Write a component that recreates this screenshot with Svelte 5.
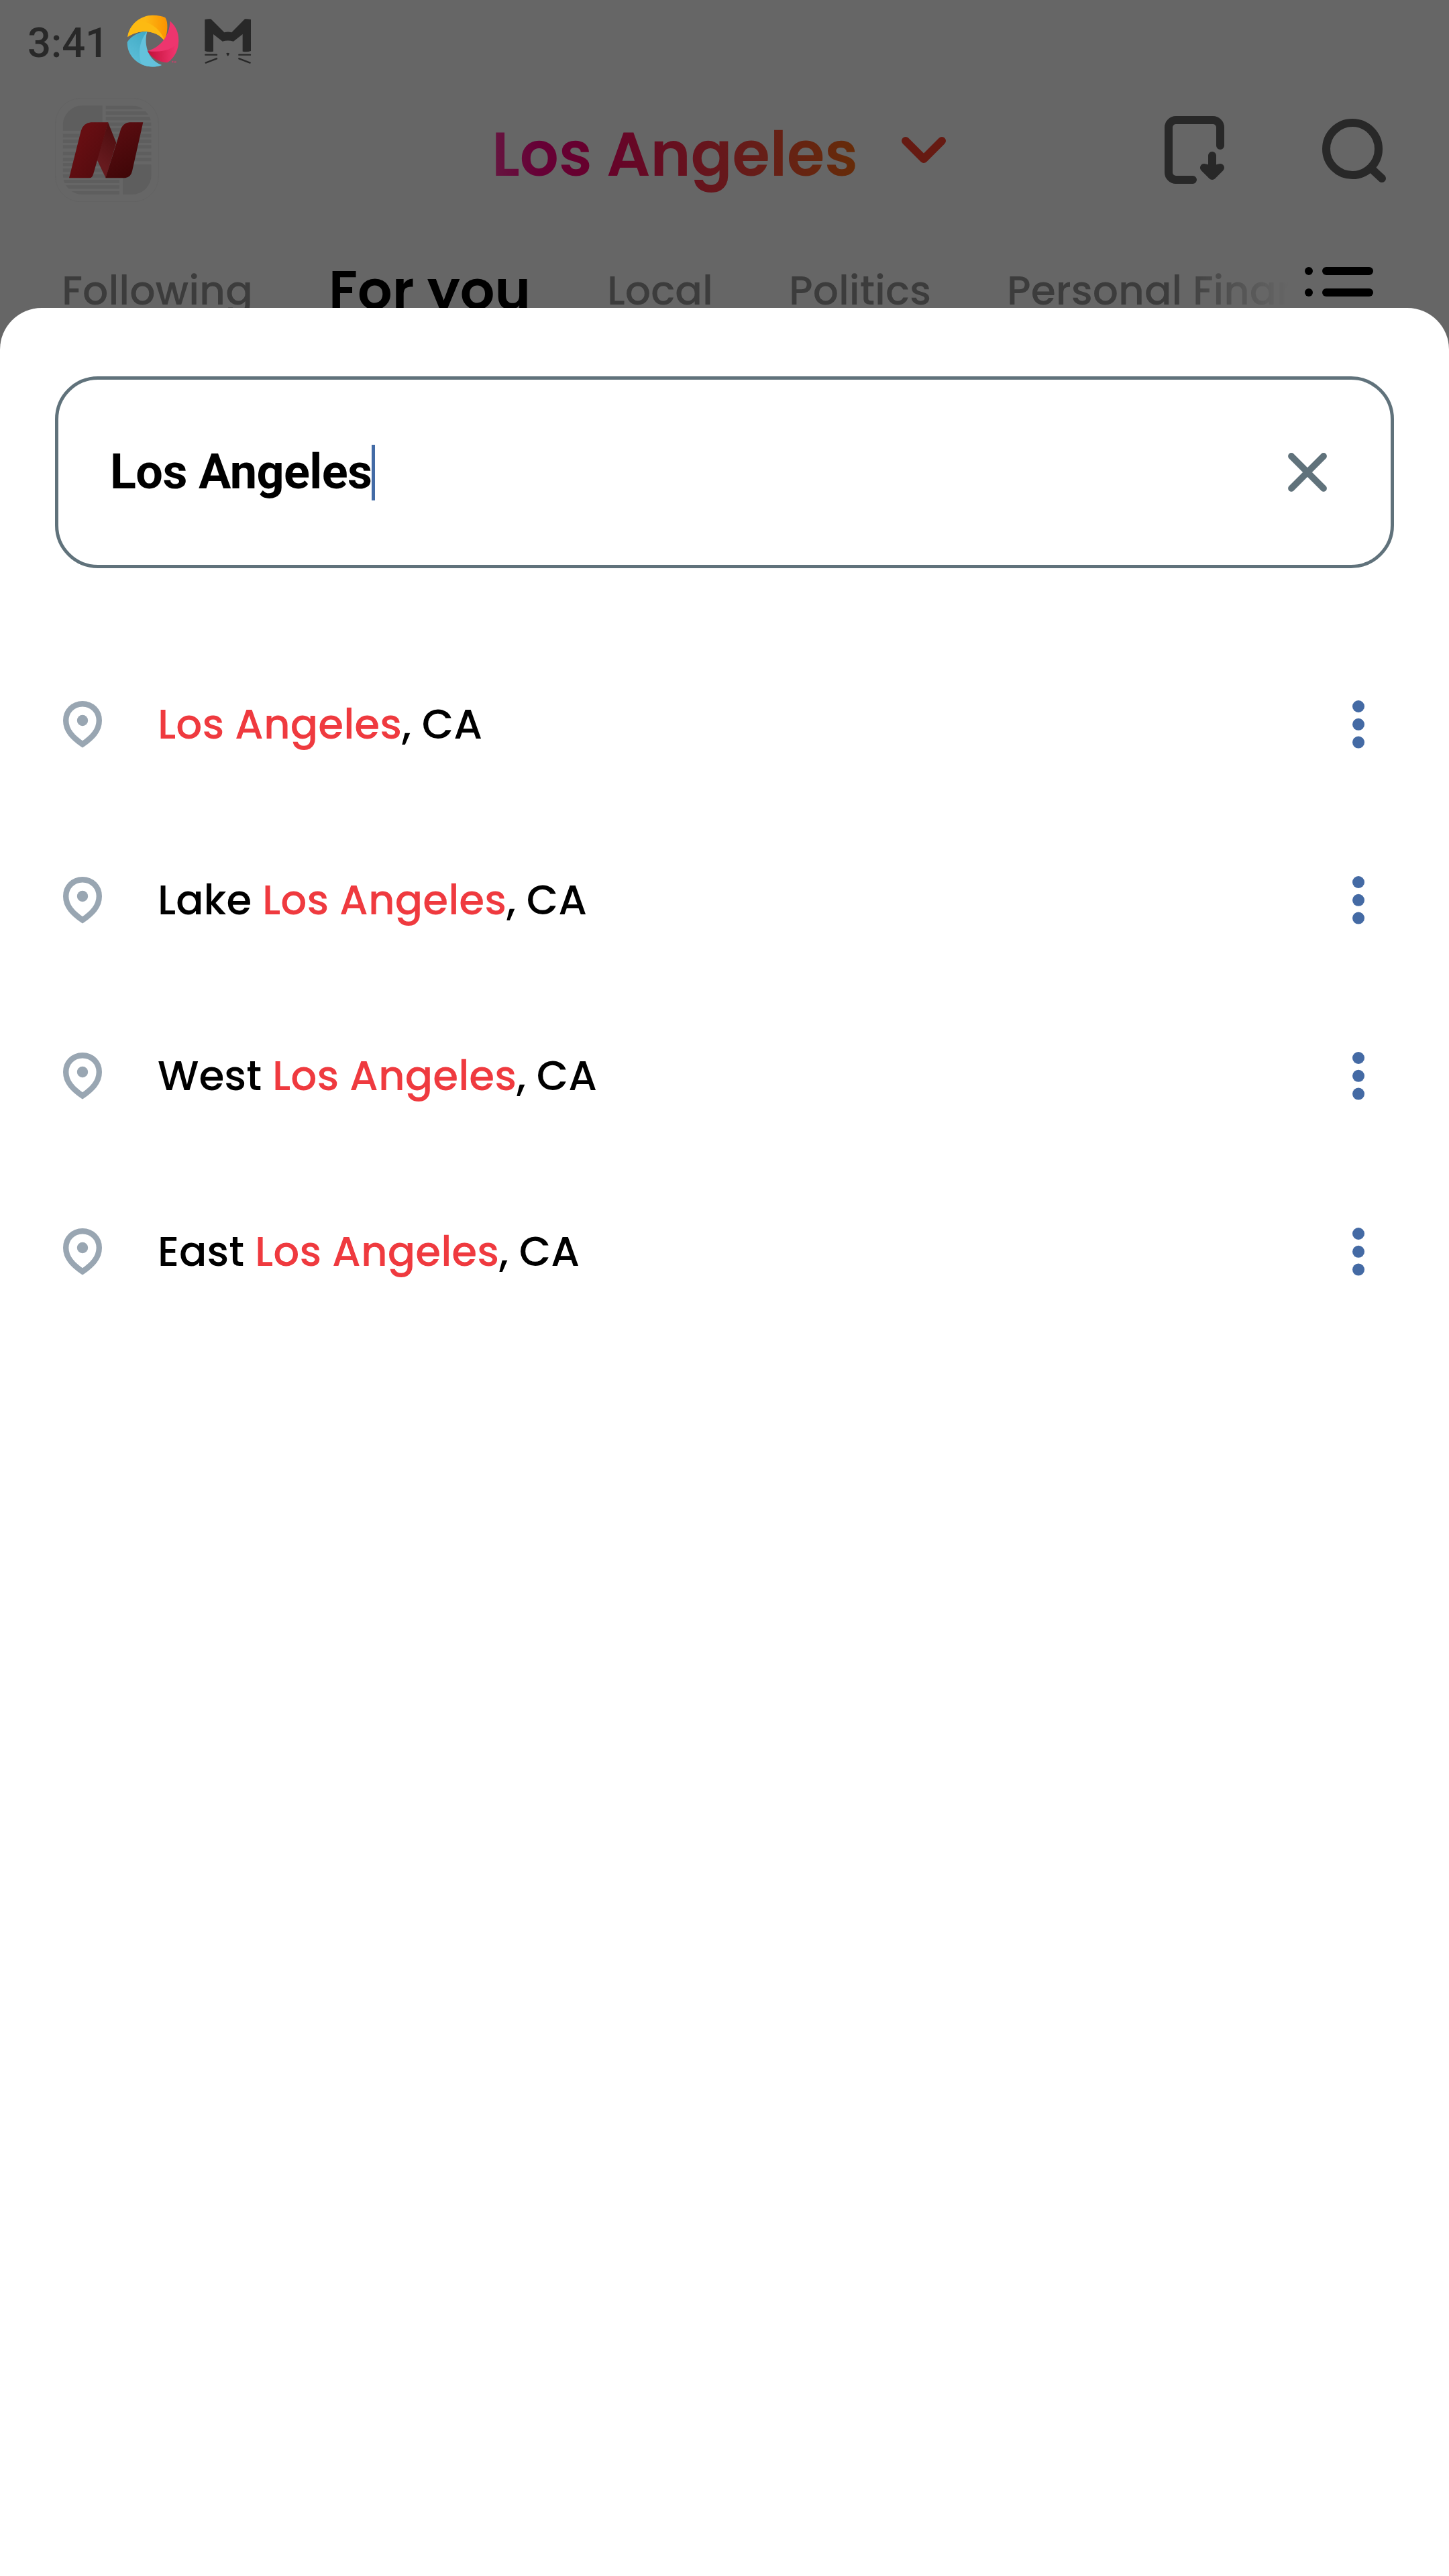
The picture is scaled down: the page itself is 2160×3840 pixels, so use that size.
<script>
  const tabs = [
    { start: 92, words: [{ text: 'Following', width: 285 }] },
    { start: 490, active: true, words: [{ text: 'For you', width: 301 }] },
    { start: 905, words: [{ text: 'Local', width: 158 }] },
    { start: 1176, words: [{ text: 'Politics', width: 212 }] },
    { start: 1501, words: [{ text: 'Personal ', width: 277 }, { text: 'Finance', width: 236 }] }
  ];
  const gaps = tabs.map((tab, i) => {
    if (i === 0) return tab.start;
    const prev = tabs[i - 1];
    return tab.start - prev.start - prev.words.reduce((sum, w) => sum + w.width, 0);
  });
  const rows = [
    { prefix: '', width: 0 },
    { prefix: 'Lake ', width: 156 },
    { prefix: 'West ', width: 171 },
    { prefix: 'East ', width: 145 }
  ];
</script>

{#snippet label(text, width, kind)}
  <svg class="label {kind}" {width} height="80">
    <text x="0" y="60" textLength={width} lengthAdjust="spacingAndGlyphs">{text}</text>
  </svg>
{/snippet}

<main class="screen">
  <header>
    <div class="status">
      <span class="clock">3:41</span>
      <svg class="swirl" viewBox="560 60 250 250" width="83.33" height="83.33">
        <defs>
          <linearGradient id="amber"><stop offset=".45" stop-color="#fdb813" /><stop offset="1" stop-color="#fb9200" /></linearGradient>
          <linearGradient id="aqua" x1="1" y1="0" x2="0.2" y2="1"><stop stop-color="#36a3be" /><stop offset="1" stop-color="#5fc0da" /></linearGradient>
          <linearGradient id="rose"><stop stop-color="#c31039" /><stop offset=".9" stop-color="#ee346d" /></linearGradient>
        </defs>
        <path fill="url(#amber)" d="M570 165C577 108 628 68 682 68C706 68 725 72 738 79C752 98 750 145 735 183C705 139 631 124 570 165Z" />
        <path fill="#fdba12" d="M570 165C574 132 593 105 620 93C672 96 719 132 735 183C705 139 631 124 570 165Z" />
        <path fill="url(#aqua)" d="M568 188C590 157 623 141 657 141C640 190 650 264 722 291C656 318 566 272 568 188Z" />
        <path fill="#63c2dc" d="M657 141C643 190 654 264 722 291C700 300 665 303 631 287C614 230 626 177 657 141Z" />
        <path fill="url(#rose)" d="M659 228C723 234 771 211 797 178C800 219 780 260 747 280C712 279 676 261 659 228Z" />
        <path fill="#ee356e" d="M759 94C789 119 801 153 797 193C764 225 713 236 659 228C713 214 759 163 759 94Z" />
        <path fill="none" stroke="#ee356e" stroke-width="2" d="M767 274h7m-4 0v8m7 0v-8l4 5l4-5v8" />
      </svg>
      <svg class="cat" viewBox="910 80 220 212" width="73.33" height="70.67">
        <path fill="#282828" d="M917 89Q930 86 944 87L1004 147Q1020 142 1037 147L1096 87Q1110 86 1123 89V230Q1104 237 1086 232V155L1045 187Q1020 180 996 187L955 155V232Q935 237 917 230Z" />
        <path fill="#282828" d="M1013 240Q1020 236 1027 240Q1026 248 1020 253Q1014 248 1013 240Z" />
        <path fill="none" stroke="#282828" stroke-width="7" stroke-linecap="round" d="M920 247H970M1070 247H1120M921 283L970 264M1119 283L1070 264" />
      </svg>
    </div>

    <div class="topbar">
      <svg class="logo" viewBox="246 437 465 465" width="155" height="155">
        <defs>
          <linearGradient id="n-left" x2="1" y2="1"><stop offset=".3" stop-color="#660e12" /><stop offset="1" stop-color="#4f0a0d" /></linearGradient>
          <linearGradient id="n-mid" x1=".7" y1="0" x2=".4" y2="1"><stop stop-color="#4c0c0e" /><stop offset=".8" stop-color="#661a1e" /></linearGradient>
          <linearGradient id="n-right" x1=".3" x2=".7" y2="1"><stop stop-color="#5c0d11" /><stop offset="1" stop-color="#3e0607" /></linearGradient>
          <clipPath id="tile"><rect x="281" y="471" width="396" height="398" rx="88" /></clipPath>
        </defs>
        <rect x="248" y="439" width="461" height="462" rx="112" fill="none" stroke="#616161" stroke-width="2" />
        <g clip-path="url(#tile)" fill="#5e5e5e">
          <path d="M281 471H458V583H281ZM549 735H677V869H549Z" />
          <path d="M473 472h204v15H473zM473 497h204v15H473zM473 522h204v15H473zM473 547h204v15H473zM473 573h204v15H473zM473 598h204v15H473zM473 623h204v15H473zM473 648h204v15H473zM473 678h204v15H473zM473 705h204v15H473z" />
          <path d="M281 598h192v15H281zM281 623h192v15H281zM281 648h192v15H281zM281 678h192v15H281zM281 705h192v15H281zM281 728h192v15H281zM281 753h192v15H281zM281 778h192v15H281zM281 803h253v15H281zM281 828h253v15H281zM281 854h253v15H281z" />
        </g>
        <path fill="url(#n-mid)" d="M483 546L520 638L473 795L434 714Z" />
        <path fill="url(#n-left)" d="M309 795L362 585Q372 549 407 546H484L418 775Q413 794 400 795Z" />
        <path fill="url(#n-right)" d="M472 795L537 588Q546 549 580 546H640L591 765Q585 792 560 795Z" />
      </svg>
      <div class="place">
        <svg class="label title" width="546" height="110">
          <defs>
            <linearGradient id="sunset" gradientUnits="userSpaceOnUse" x1="0" y1="90" x2="548" y2="60">
              <stop stop-color="#661640" /><stop offset=".13" stop-color="#660036" /><stop offset=".28" stop-color="#66002c" />
              <stop offset=".5" stop-color="#66101f" /><stop offset=".75" stop-color="#661f17" /><stop offset="1" stop-color="#662c08" />
            </linearGradient>
          </defs>
          <text x="0" y="90" textLength="546" lengthAdjust="spacingAndGlyphs">Los Angeles</text>
        </svg>
        <svg class="chevron" viewBox="0 0 66 40" width="66" height="40"><path d="M6 6L33 33L60 6" /></svg>
      </div>
      <svg class="tool save" viewBox="0 0 90 102" width="90" height="102">
        <path d="M83 44V17A11 11 0 0 0 72 6H17A11 11 0 0 0 6 17V84A11 11 0 0 0 17 95H42" />
        <path class="arrow" d="M71 59V89M59 77L71 89L83 77L71 80Z" />
      </svg>
      <svg class="tool find" viewBox="0 0 96 96" width="96" height="96">
        <circle cx="45" cy="45" r="39" /><path d="M74 75L89 89" />
      </svg>
    </div>

    <nav>
      <div class="tabs">
        {#each tabs as tab, i}
          <a class="tab" style:margin-left="{gaps[i]}px">
            {#each tab.words as word}{@render label(word.text, word.width, tab.active ? 'tab-on' : 'tab-off')}{/each}
          </a>
        {/each}
      </div>
      <svg class="list" viewBox="0 0 102 44" width="102" height="44">
        <circle cx="6" cy="6" r="6" /><rect x="26" width="76" height="12" rx="6" />
        <circle cx="6" cy="38" r="6" /><rect x="26" y="32" width="76" height="12" rx="6" />
      </svg>
    </nav>
  </header>

  <section class="sheet">
    <div class="field">
      <span class="query">Los Angeles</span><i class="caret"></i>
      <svg class="clear" viewBox="0 0 58 58" width="58" height="58"><path d="M5 5L53 53M53 5L5 53" /></svg>
    </div>
    <ul>
      {#each rows as row}
        <li>
          <svg class="pin" viewBox="0 0 58 70" width="58" height="70">
            <path d="M29 4.200C14.500 4.200 4.200 15.500 4.200 29C4.200 44 14.500 54.500 29 64.500C43.500 54.500 53.800 44 53.800 29C53.800 15.500 43.500 4.200 29 4.200Z" />
            <circle cx="29" cy="29" r="8.200" />
          </svg>
          <div class="name">
            {#if row.prefix}{@render label(row.prefix, row.width, 'plain')}{/if}
            {@render label('Los Angeles', 364, 'match')}
            {@render label(', CA', 120, 'plain')}
          </div>
          <svg class="more" viewBox="0 0 20 74" width="20" height="74">
            <circle cx="10" cy="10" r="9" /><circle cx="10" cy="36.800" r="9" /><circle cx="10" cy="63.600" r="9" />
          </svg>
        </li>
      {/each}
    </ul>
  </section>
</main>

<style>
  :global(body) { margin: 0; background: #666; }
  .screen { width: 2160px; height: 3840px; overflow: hidden; display: flex; flex-direction: column; background: #666; }
  svg { display: block; flex: none; }
  header { height: 459px; flex: none; }

  .status { height: 122px; box-sizing: border-box; padding: 1.500px 0 0 41px; display: flex; align-items: center; }
  .clock { width: 145px; font: 500 61.500px/72px Roboto, sans-serif; color: #282828; padding-top: 4px; }
  .swirl { margin-left: 1px; }
  .cat { margin-left: 33px; }

  .topbar { height: 202px; padding-left: 82px; display: flex; align-items: flex-start; }
  .logo { margin-top: 24px; }
  .place { margin: 50px 0 0 496px; display: flex; align-items: flex-start; width: 677px; justify-content: space-between; }
  .label { overflow: visible; font-family: Poppins, Inter, sans-serif; font-feature-settings: 'cv11' 1; }
  .label text { white-space: pre; }
  .title text { font-size: 92px; font-weight: 600; fill: url(#sunset); }
  .chevron { margin-top: 32px; fill: none; stroke: #661a12; stroke-width: 12; stroke-linecap: round; stroke-linejoin: round; }
  .tool { fill: none; stroke: #282828; stroke-width: 12; stroke-linecap: round; stroke-linejoin: round; }
  .save { margin: 51px 0 0 326px; }
  .save .arrow { fill: #282828; }
  .find { margin: 55px 0 0 145px; }

  nav { display: flex; align-items: flex-start; height: 135px; }
  .tabs { width: 1920px; height: 135px; padding-top: 70px; box-sizing: border-box; overflow: hidden; display: flex; flex: none; mask-image: linear-gradient(to right, #000 1750px, transparent 1920px); }
  .tab { display: flex; flex: none; }
  .tab-off text { font-size: 61px; font-weight: 500; fill: #3c3c3c; }
  .tab-on { position: relative; top: 7px; }
  .tab-on text { font-size: 81px; font-weight: 600; fill: #000; }
  .list { margin: 74px 0 0 25px; }

  .sheet { flex: 1; position: relative; box-sizing: border-box; padding: 102px 82px 0; background: #fff; border-radius: 62px 62px 0 0; }
  .field { box-sizing: border-box; width: 1996px; height: 286px; border: 5px solid #60727b; border-radius: 64px; padding: 0 95.500px 0 77px; display: flex; align-items: center; }
  .query { font: 700 72px/84px Roboto, sans-serif; letter-spacing: -0.600px; color: #000; }
  .caret { width: 5px; height: 83px; background: #436ba6; }
  .clear { margin-left: auto; fill: none; stroke: #60727b; stroke-width: 9.800; stroke-linecap: round; }
  ul { list-style: none; margin: 102px 0 0; padding: 0; }
  li { height: 262px; display: flex; align-items: center; padding: 0 43.500px 0 12.300px; }
  .pin { fill: none; stroke: #99a6b2; stroke-width: 8.400; stroke-linejoin: miter; }
  .pin circle { fill: #99a6b2; stroke: none; }
  .name { display: flex; margin-left: 82.700px; padding-top: 2px; }
  .match text, .plain text { font-size: 62px; font-weight: 500; fill: #000; }
  .match text { fill: #ef3a3f; }
  .more { margin-left: auto; fill: #446aa4; }
</style>
